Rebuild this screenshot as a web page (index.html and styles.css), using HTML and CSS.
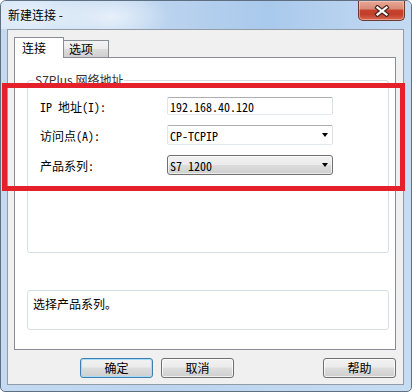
FILE: index.html
```html
<!DOCTYPE html>
<html lang="zh-CN">
<head>
    <meta charset="UTF-8">
    <title>新建连接</title>
    <link rel="stylesheet" href="styles.css">
</head>
<body>
    <div class="window">
        <div class="titlebar">
            <span class="title">新建连接 -</span>
            <div class="close">
                <svg width="16" height="12" viewBox="0 0 16 12">
                    <path d="M3.5 2.5 L12.5 9.5 M12.5 2.5 L3.5 9.5" stroke="#4a2620" stroke-width="4.5" stroke-linecap="square"/>
                    <path d="M3.5 2.5 L12.5 9.5 M12.5 2.5 L3.5 9.5" stroke="#fff" stroke-width="2.2" stroke-linecap="square"/>
                </svg>
            </div>
        </div>

        <div class="client">
            <div class="tabs">
                <div class="tab active">连接</div>
                <div class="tab">选项</div>
            </div>

            <div class="panel">
                <fieldset class="group">
                    <legend>S7Plus 网络地址</legend>
                    <div class="row">
                        <span class="label">IP 地址(I):</span>
                        <div class="field edit">192.168.40.120</div>
                    </div>
                    <div class="row">
                        <span class="label">访问点(A):</span>
                        <div class="field combo">CP-TCPIP<span class="arrow"></span></div>
                    </div>
                    <div class="row">
                        <span class="label">产品系列:</span>
                        <div class="field combo list">S7 1200<span class="arrow"></span></div>
                    </div>
                </fieldset>
                <div class="desc">选择产品系列。</div>
            </div>

            <div class="buttons">
                <button class="btn default">确定</button>
                <button class="btn">取消</button>
                <button class="btn help">帮助</button>
            </div>
        </div>

        <div class="highlight"></div>
    </div>
</body>
</html>
```

FILE: styles.css
```css
* {
    box-sizing: border-box;
}

body {
    margin: 0;
    background: #fff;
    font-family: "Noto Sans CJK SC", sans-serif;
    font-size: 12px;
    color: #000;
}

.window {
    position: relative;
    width: 412px;
    height: 392px;
    border: 1px solid #5f6f82;
    border-radius: 6px 6px 5px 5px;
    background: linear-gradient(to right, #c3daf2, #bcd4ee 40%, #c6dcf3);
    padding: 0 7px 6px 6px;
    display: flex;
    flex-direction: column;
}

/* title bar */
.titlebar {
    height: 28px;
    margin: 0 -7px 0 -6px;
    padding: 0 6px 0 7px;
    display: flex;
    align-items: flex-start;
    border-radius: 5px 5px 0 0;
    background:
        radial-gradient(ellipse 70px 30px at 30px 14px, rgba(235, 243, 251, 0.9), rgba(235, 243, 251, 0)),
        radial-gradient(ellipse 60px 28px at 110px 16px, rgba(240, 246, 252, 0.8), rgba(240, 246, 252, 0)),
        linear-gradient(to right, #d2e3f5, #b7d1ee 45%, #a9c9ec 65%, #c4daf2);
}

.title {
    line-height: 28px;
    color: #000;
}

.close {
    margin-left: auto;
    width: 47px;
    height: 20px;
    border: 1px solid #6a3a33;
    border-top: none;
    border-radius: 0 0 5px 5px;
    background: linear-gradient(#e9a898, #d98b78 40%, #c5432e 50%, #c13e29 70%, #d9694f);
    box-shadow: inset 0 0 0 1px rgba(255, 220, 210, 0.45);
    display: flex;
    align-items: center;
    justify-content: center;
}

/* client area */
.client {
    height: 356px;
    border: 1px solid #929ba6;
    background: #f0f0f0;
    padding: 7px 7px 0 6px;
    display: flex;
    flex-direction: column;
}

.tabs {
    display: flex;
    align-items: flex-end;
    height: 21px;
    margin-bottom: -1px;
    position: relative;
    z-index: 1;
}

.tab {
    width: 45px;
    height: 17px;
    margin-bottom: 1px;
    border: 1px solid #898c95;
    border-left: none;
    border-bottom: none;
    background: linear-gradient(#f3f3f3, #ebebeb 50%, #dddddd 50%, #cfcfcf);
    padding-left: 5px;
    line-height: 16px;
}

.tab.active {
    width: 50px;
    height: 21px;
    margin-bottom: 0;
    border-left: 1px solid #898c95;
    background: #fff;
    padding-left: 7px;
    line-height: 20px;
}

.panel {
    height: 293px;
    border: 1px solid #898c95;
    background: #fff;
    padding: 0 6px 0 12px;
}

.group {
    margin: 14px 0 0;
    padding: 9px 0 77px 12px;
    border: 1px solid #d5dfe5;
    border-radius: 3px;
}

.group legend {
    margin-left: -6px;
    padding: 0 1px;
    line-height: 16px;
    color: #333;
}

.row {
    display: flex;
    align-items: center;
    height: 20px;
    margin-top: 10px;
}

.row:first-of-type {
    height: 18px;
    margin-top: 0;
}

.label,
.field {
    font-family: "Noto Sans Mono CJK SC", "Liberation Mono", monospace;
}

.label {
    width: 127px;
}

.field {
    width: 166px;
    height: 100%;
    display: flex;
    align-items: center;
    padding-left: 2px;
    border: 1px solid;
    border-color: #abadb3 #dbdfe6 #e3e9ef #e2e3ea;
    border-radius: 2px;
    background: #fff;
}

.arrow {
    margin-left: auto;
    margin-right: 4px;
    width: 0;
    height: 0;
    border-left: 3.5px solid transparent;
    border-right: 3.5px solid transparent;
    border-top: 4px solid #000;
}

.combo.list {
    border: 1px solid #707070;
    border-radius: 3px;
    background: linear-gradient(#f2f2f2, #ebebeb 50%, #dddddd 50%, #cfcfcf);
    box-shadow: inset 0 0 0 1px rgba(255, 255, 255, 0.6);
}

.desc {
    margin-top: 37px;
    height: 40px;
    border: 1px solid #d5dfe5;
    border-radius: 3px;
    padding: 5px;
    line-height: 16px;
}

/* buttons */
.buttons {
    display: flex;
    gap: 8px;
    margin-top: 8px;
    padding-left: 66px;
}

.btn {
    width: 73px;
    height: 20px;
    padding: 0;
    border: 1px solid #707070;
    border-radius: 3px;
    background: linear-gradient(#f2f2f2, #ebebeb 45%, #dddddd 50%, #cfcfcf);
    box-shadow: inset 0 0 0 1px rgba(255, 255, 255, 0.7);
    font-family: "Noto Sans CJK SC", sans-serif;
    font-size: 12px;
    line-height: 18px;
    color: #000;
}

.btn.default {
    border-color: #3c7fb1;
    box-shadow: inset 0 0 0 1px #a6dcf7;
}

.btn.help {
    margin-left: auto;
}

/* red annotation frame */
.highlight {
    position: absolute;
    left: 1px;
    top: 82px;
    width: 403px;
    height: 108px;
    border: 5px solid #e4202a;
}
```
